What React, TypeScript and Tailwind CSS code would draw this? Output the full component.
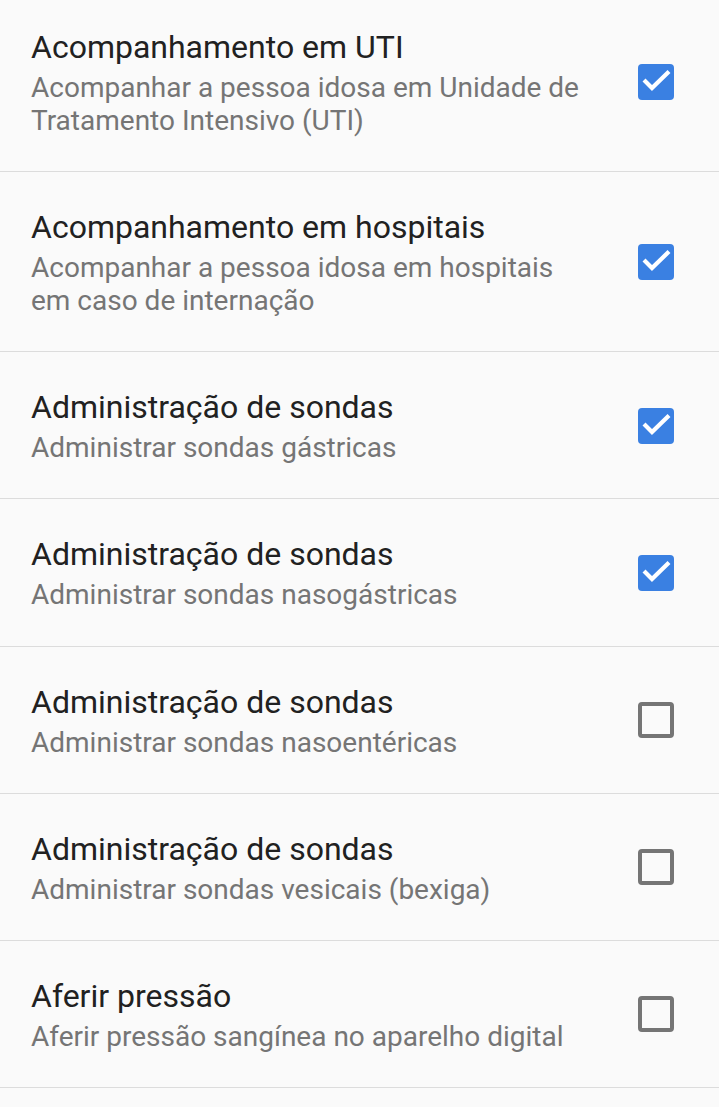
import React from "react";

type Item = {
  title: string;
  lines: string[];
  checked: boolean;
};

const items: Item[] = [
  {
    title: "Acompanhamento em UTI",
    lines: ["Acompanhar a pessoa idosa em Unidade de", "Tratamento Intensivo (UTI)"],
    checked: true,
  },
  {
    title: "Acompanhamento em hospitais",
    lines: ["Acompanhar a pessoa idosa em hospitais", "em caso de internação"],
    checked: true,
  },
  { title: "Administração de sondas", lines: ["Administrar sondas gástricas"], checked: true },
  { title: "Administração de sondas", lines: ["Administrar sondas nasogástricas"], checked: true },
  { title: "Administração de sondas", lines: ["Administrar sondas nasoentéricas"], checked: false },
  { title: "Administração de sondas", lines: ["Administrar sondas vesicais (bexiga)"], checked: false },
  { title: "Aferir pressão", lines: ["Aferir pressão sangínea no aparelho digital"], checked: false },
];

function Checkbox({ checked }: { checked: boolean }) {
  if (checked) {
    return (
      <div className="w-[36px] h-[36px] rounded-[4px] bg-[#3a80e2] flex items-center justify-center">
        <svg width="36" height="36" viewBox="0 0 36 36" fill="none">
          <path d="M7.5 17.5 L14 24 L29.5 9" stroke="white" strokeWidth="4.2" strokeLinecap="square" />
        </svg>
      </div>
    );
  }
  return <div className="w-[36px] h-[36px] rounded-[4px] border-[4px] border-[#757575]" />;
}

export default function App() {
  return (
    <div className="h-screen bg-[#fafafa] overflow-hidden" style={{ fontFamily: "Roboto, 'Noto Sans', sans-serif" }}>
      <div className="mt-[-8.2px]">
        {items.map((item, i) => (
          <div key={i}>
            <div className="flex items-center pl-[31px] pr-[45px] pt-[35px] pb-[34.2px]">
              <div className="flex-1">
                <div className="text-[32px] leading-[40px] text-[#212121]">{item.title}</div>
                <div className="mt-[4px] text-[28px] leading-[33px] text-[#757575]">
                  {item.lines.map((l, j) => (
                    <div key={j}>{l}</div>
                  ))}
                </div>
              </div>
              <Checkbox checked={item.checked} />
            </div>
            <div className="h-px bg-[#dcdcdc]" />
          </div>
        ))}
      </div>
    </div>
  );
}
